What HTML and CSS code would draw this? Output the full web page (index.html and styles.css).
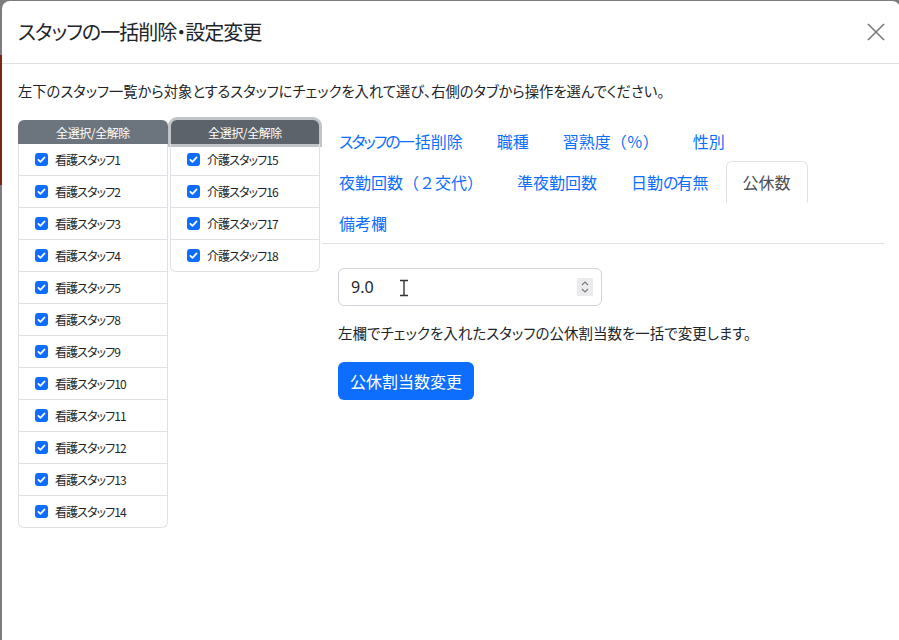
FILE: index.html
```html
<!DOCTYPE html>
<html lang="ja">
<head>
<meta charset="utf-8">
<title>スタッフの一括削除・設定変更</title>
<link rel="stylesheet" href="styles.css">
</head>
<body>
<div class="modal">
  <div class="modal-header">
    <h5 class="modal-title">スタッフの一括削除・設定変更</h5>
    <button class="btn-close" aria-label="Close">
      <svg width="18" height="18" viewBox="0 0 18 18"><path d="M1 1L17 17M17 1L1 17" stroke="#7a7a7a" stroke-width="1.6" fill="none"/></svg>
    </button>
  </div>
  <div class="modal-body">
    <p class="lead-text">左下のスタッフ一覧から対象とするスタッフにチェックを入れて選び、右側のタブから操作を選んでください。</p>
    <div class="layout">
      <div class="staff-col">
        <button class="col-btn">全選択/全解除</button>
        <ul class="staff-list">
          <li><span class="check"><svg viewBox="0 0 13 13"><path d="M3.4 6.8L5.5 8.8L9.6 4.4" stroke="#fff" stroke-width="1.7" fill="none" stroke-linecap="round" stroke-linejoin="round"/></svg></span>看護スタッフ1</li>
          <li><span class="check"><svg viewBox="0 0 13 13"><path d="M3.4 6.8L5.5 8.8L9.6 4.4" stroke="#fff" stroke-width="1.7" fill="none" stroke-linecap="round" stroke-linejoin="round"/></svg></span>看護スタッフ2</li>
          <li><span class="check"><svg viewBox="0 0 13 13"><path d="M3.4 6.8L5.5 8.8L9.6 4.4" stroke="#fff" stroke-width="1.7" fill="none" stroke-linecap="round" stroke-linejoin="round"/></svg></span>看護スタッフ3</li>
          <li><span class="check"><svg viewBox="0 0 13 13"><path d="M3.4 6.8L5.5 8.8L9.6 4.4" stroke="#fff" stroke-width="1.7" fill="none" stroke-linecap="round" stroke-linejoin="round"/></svg></span>看護スタッフ4</li>
          <li><span class="check"><svg viewBox="0 0 13 13"><path d="M3.4 6.8L5.5 8.8L9.6 4.4" stroke="#fff" stroke-width="1.7" fill="none" stroke-linecap="round" stroke-linejoin="round"/></svg></span>看護スタッフ5</li>
          <li><span class="check"><svg viewBox="0 0 13 13"><path d="M3.4 6.8L5.5 8.8L9.6 4.4" stroke="#fff" stroke-width="1.7" fill="none" stroke-linecap="round" stroke-linejoin="round"/></svg></span>看護スタッフ8</li>
          <li><span class="check"><svg viewBox="0 0 13 13"><path d="M3.4 6.8L5.5 8.8L9.6 4.4" stroke="#fff" stroke-width="1.7" fill="none" stroke-linecap="round" stroke-linejoin="round"/></svg></span>看護スタッフ9</li>
          <li><span class="check"><svg viewBox="0 0 13 13"><path d="M3.4 6.8L5.5 8.8L9.6 4.4" stroke="#fff" stroke-width="1.7" fill="none" stroke-linecap="round" stroke-linejoin="round"/></svg></span>看護スタッフ10</li>
          <li><span class="check"><svg viewBox="0 0 13 13"><path d="M3.4 6.8L5.5 8.8L9.6 4.4" stroke="#fff" stroke-width="1.7" fill="none" stroke-linecap="round" stroke-linejoin="round"/></svg></span>看護スタッフ11</li>
          <li><span class="check"><svg viewBox="0 0 13 13"><path d="M3.4 6.8L5.5 8.8L9.6 4.4" stroke="#fff" stroke-width="1.7" fill="none" stroke-linecap="round" stroke-linejoin="round"/></svg></span>看護スタッフ12</li>
          <li><span class="check"><svg viewBox="0 0 13 13"><path d="M3.4 6.8L5.5 8.8L9.6 4.4" stroke="#fff" stroke-width="1.7" fill="none" stroke-linecap="round" stroke-linejoin="round"/></svg></span>看護スタッフ13</li>
          <li><span class="check"><svg viewBox="0 0 13 13"><path d="M3.4 6.8L5.5 8.8L9.6 4.4" stroke="#fff" stroke-width="1.7" fill="none" stroke-linecap="round" stroke-linejoin="round"/></svg></span>看護スタッフ14</li>
        </ul>
      </div>
      <div class="staff-col">
        <button class="col-btn col-btn-focus">全選択/全解除</button>
        <ul class="staff-list">
          <li><span class="check"><svg viewBox="0 0 13 13"><path d="M3.4 6.8L5.5 8.8L9.6 4.4" stroke="#fff" stroke-width="1.7" fill="none" stroke-linecap="round" stroke-linejoin="round"/></svg></span>介護スタッフ15</li>
          <li><span class="check"><svg viewBox="0 0 13 13"><path d="M3.4 6.8L5.5 8.8L9.6 4.4" stroke="#fff" stroke-width="1.7" fill="none" stroke-linecap="round" stroke-linejoin="round"/></svg></span>介護スタッフ16</li>
          <li><span class="check"><svg viewBox="0 0 13 13"><path d="M3.4 6.8L5.5 8.8L9.6 4.4" stroke="#fff" stroke-width="1.7" fill="none" stroke-linecap="round" stroke-linejoin="round"/></svg></span>介護スタッフ17</li>
          <li><span class="check"><svg viewBox="0 0 13 13"><path d="M3.4 6.8L5.5 8.8L9.6 4.4" stroke="#fff" stroke-width="1.7" fill="none" stroke-linecap="round" stroke-linejoin="round"/></svg></span>介護スタッフ18</li>
        </ul>
      </div>
      <div class="tabs-area">
        <ul class="nav-tabs">
          <li><a class="nav-link"><span class="kana">スタッフの</span>一括削除</a></li>
          <li><a class="nav-link">職種</a></li>
          <li><a class="nav-link">習熟度（％）</a></li>
          <li><a class="nav-link">性別</a></li>
          <li class="nav-break"></li>
          <li><a class="nav-link">夜勤回数（２交代）</a></li>
          <li><a class="nav-link">準夜勤回数</a></li>
          <li><a class="nav-link">日勤<span class="kana">の</span>有無</a></li>
          <li><a class="nav-link active">公休数</a></li>
          <li class="nav-break"></li>
          <li><a class="nav-link">備考欄</a></li>
        </ul>
        <div class="tab-pane">
          <div class="num-input">
            <span class="num-value">9.0</span>
            <span class="spin"><svg width="16" height="18" viewBox="0 0 16 18"><rect width="16" height="18" rx="1" fill="#ebebee"/><path d="M5 7L8 4L11 7M5 11L8 14L11 11" stroke="#777" stroke-width="1.1" fill="none"/></svg></span>
            <svg class="ibeam" width="10" height="18" viewBox="0 0 10 18"><path d="M1 1.5H9M1 16.5H9M5 1.5V16.5" stroke="#fff" stroke-width="3.2" fill="none"/><path d="M1 1.5H9M1 16.5H9M5 1.5V16.5" stroke="#333" stroke-width="1.4" fill="none"/></svg>
          </div>
          <p class="pane-text">左欄でチェックを入れたスタッフの公休割当数を一括で変更します。</p>
          <button class="btn-primary">公休割当数変更</button>
        </div>
      </div>
    </div>
  </div>
</div>
</body>
</html>
```

FILE: styles.css
```css
html, body {
  margin: 0;
  height: 640px;
  overflow: hidden;
}
body {
  background: linear-gradient(to bottom, #7d7d7d 0, #7d7d7d 55px, #7a2614 55px, #7a2614 185px, #7d7d7d 185px);
  font-family: "Noto Sans CJK JP", "Noto Sans", sans-serif;
  font-feature-settings: "palt";
  color: #212529;
}
.modal {
  margin: 1px 0 0 2px;
  width: 898px;
  height: 700px;
  background: #fff;
  border-radius: 8px 8px 0 0;
  box-sizing: border-box;
}
.modal-header {
  display: flex;
  align-items: center;
  justify-content: space-between;
  padding: 16px;
  border-bottom: 1px solid #dee2e6;
}
.modal-title {
  margin: 0;
  font-size: 20px;
  font-weight: 400;
  line-height: 30px;
  letter-spacing: -1px;
}
.btn-close {
  border: 0;
  background: none;
  padding: 0;
  width: 18px;
  height: 18px;
  display: flex;
  margin-right: -1px;
}
.modal-body {
  padding: 16px;
}
.lead-text {
  margin: 0 0 18px;
  font-size: 14.3px;
  line-height: 22px;
}
.layout {
  display: flex;
  align-items: flex-start;
  gap: 2px;
}
.staff-col {
  width: 150px;
  flex: none;
  display: flex;
  flex-direction: column;
}
.col-btn {
  height: 24px;
  border: 0;
  border-radius: 6px 6px 0 0;
  background: #6c757d;
  color: #fff;
  font-family: inherit;
  font-feature-settings: "palt";
  font-size: 12px;
  letter-spacing: -0.4px;
  padding: 0;
}
.col-btn-focus {
  background: #5c636a;
  box-shadow: 0 0 0 3px rgba(130, 138, 145, 0.5);
  margin: 0 1px;
}
.staff-list {
  list-style: none;
  margin: 0;
  padding: 0;
  border: 1px solid #dee2e6;
  border-top: 0;
  border-radius: 0 0 6px 6px;
}
.staff-list li {
  display: flex;
  align-items: center;
  height: 31px;
  padding: 0 16px;
  font-size: 12px;
  letter-spacing: -0.9px;
  border-bottom: 1px solid #dee2e6;
}
.staff-list li:last-child {
  border-bottom: 0;
}
.check {
  width: 13px;
  height: 13px;
  border-radius: 3px;
  background: #0d6efd;
  display: flex;
  margin-right: 7px;
  flex: none;
}
.check svg {
  width: 13px;
  height: 13px;
}
.tabs-area {
  flex: 1;
  min-width: 0;
}
.nav-tabs {
  list-style: none;
  margin: 0;
  padding: 0;
  display: flex;
  flex-wrap: wrap;
  border-bottom: 1px solid #dee2e6;
}
.nav-break {
  flex-basis: 100%;
  height: 0;
}
.nav-link {
  display: block;
  padding: 8px 16px;
  font-size: 16px;
  line-height: 24px;
  font-feature-settings: normal;
  color: #0d6efd;
  border: 1px solid transparent;
  border-radius: 6px 6px 0 0;
  margin-bottom: -1px;
}
.kana {
  font-feature-settings: "palt";
  letter-spacing: -2px;
}
.nav-link.active {
  color: #495057;
  border-color: #dee2e6 #dee2e6 transparent;
  background: #fff;
}
.tab-pane {
  padding: 24px 0 0 16px;
}
.num-input {
  position: relative;
  width: 264px;
  height: 38px;
  box-sizing: border-box;
  border: 1px solid #ced4da;
  border-radius: 6px;
  display: flex;
  align-items: center;
  padding: 0 12px;
}
.num-value {
  flex: 1;
  font-family: "Noto Sans", sans-serif;
  font-size: 16px;
}
.spin {
  display: flex;
  margin-right: -4px;
}
.ibeam {
  position: absolute;
  left: 60px;
  top: 10px;
}
.pane-text {
  margin: 16px 0 19px;
  font-size: 14.5px;
  line-height: 21px;
}
.btn-primary {
  height: 38px;
  padding: 0 12px;
  border: 0;
  border-radius: 6px;
  background: #0d6efd;
  color: #fff;
  font-family: inherit;
  font-feature-settings: normal;
  font-size: 16px;
}
```
